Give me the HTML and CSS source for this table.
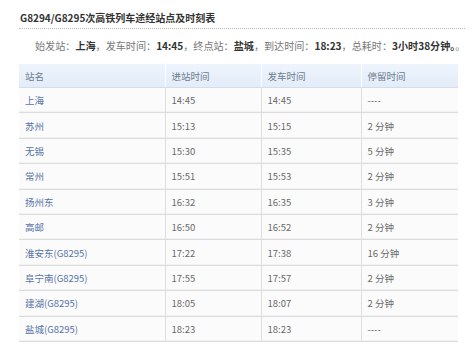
FILE: index.html
```html
<!DOCTYPE html>
<html lang="zh">
<head>
<meta charset="utf-8">
<link rel="stylesheet" href="styles.css">
</head>
<body>
<div class="page">
  <h1 class="title">G8294/G8295次高铁列车途经站点及时刻表</h1>
  <p class="info">始发站：<b>上海</b>，发车时间：<b>14:45</b>，终点站：<b>盐城</b>，到达时间：<b>18:23</b>，总耗时：<b>3小时38分钟。</b>。</p>
  <table class="timetable">
    <colgroup>
      <col class="c1"><col class="c2"><col class="c3"><col class="c4">
    </colgroup>
    <thead>
      <tr><th>站名</th><th>进站时间</th><th>发车时间</th><th>停留时间</th></tr>
    </thead>
    <tbody>
      <tr><td class="st">上海</td><td>14:45</td><td>14:45</td><td>----</td></tr>
      <tr><td class="st">苏州</td><td>15:13</td><td>15:15</td><td>2 分钟</td></tr>
      <tr><td class="st">无锡</td><td>15:30</td><td>15:35</td><td>5 分钟</td></tr>
      <tr><td class="st">常州</td><td>15:51</td><td>15:53</td><td>2 分钟</td></tr>
      <tr><td class="st">扬州东</td><td>16:32</td><td>16:35</td><td>3 分钟</td></tr>
      <tr><td class="st">高邮</td><td>16:50</td><td>16:52</td><td>2 分钟</td></tr>
      <tr><td class="st">淮安东(G8295)</td><td>17:22</td><td>17:38</td><td>16 分钟</td></tr>
      <tr><td class="st">阜宁南(G8295)</td><td>17:55</td><td>17:57</td><td>2 分钟</td></tr>
      <tr><td class="st">建湖(G8295)</td><td>18:05</td><td>18:07</td><td>2 分钟</td></tr>
      <tr><td class="st">盐城(G8295)</td><td>18:23</td><td>18:23</td><td>----</td></tr>
    </tbody>
  </table>
</div>
</body>
</html>
```

FILE: styles.css
```css
html, body {
  margin: 0;
  padding: 0;
  background: #ffffff;
}

body {
  font-family: "Noto Sans CJK SC", "Noto Sans", sans-serif;
  color: #555;
}

.page {
  padding: 11px 9px 0 19px;
}

.title {
  margin: 0;
  padding: 0 0 3px 1px;
  font-size: 10px;
  line-height: 14px;
  font-weight: bold;
  color: #333;
  border-bottom: 1px dotted #bbb;
}

.info {
  margin: 10px 0 0 16px;
  font-size: 10.1px;
  line-height: 14px;
  color: #777;
  white-space: nowrap;
}

.info b {
  color: #333;
  font-weight: bold;
}

.timetable {
  margin-top: 11px;
  width: 439px;
  border-collapse: collapse;
  table-layout: fixed;
  font-size: 9.5px;
  background: #fbfbfb;
}

.c1 { width: 146px; }
.c2 { width: 96px; }
.c3 { width: 100px; }
.c4 { width: 97px; }

.timetable th {
  height: 23px;
  padding: 0 0 0 6px;
  text-align: left;
  font-weight: normal;
  color: #6a7a8e;
  background: linear-gradient(#eef4fc, #e2ecf8);
  border-bottom: 1px solid #d4deea;
  border-left: 1px solid #ffffff;
}

.timetable th:first-child {
  border-left: none;
}

.timetable td {
  height: 24.4px;
  padding: 0 0 0 6px;
  color: #6a6a6a;
  border-bottom: 1px solid #dcdcdc;
  border-left: 1px solid #dedede;
  box-shadow: inset 0 -1px 0 #f2f2f2;
}

.timetable td:first-child {
  border-left: none;
}

.timetable td.st {
  color: #5874a8;
}
```
